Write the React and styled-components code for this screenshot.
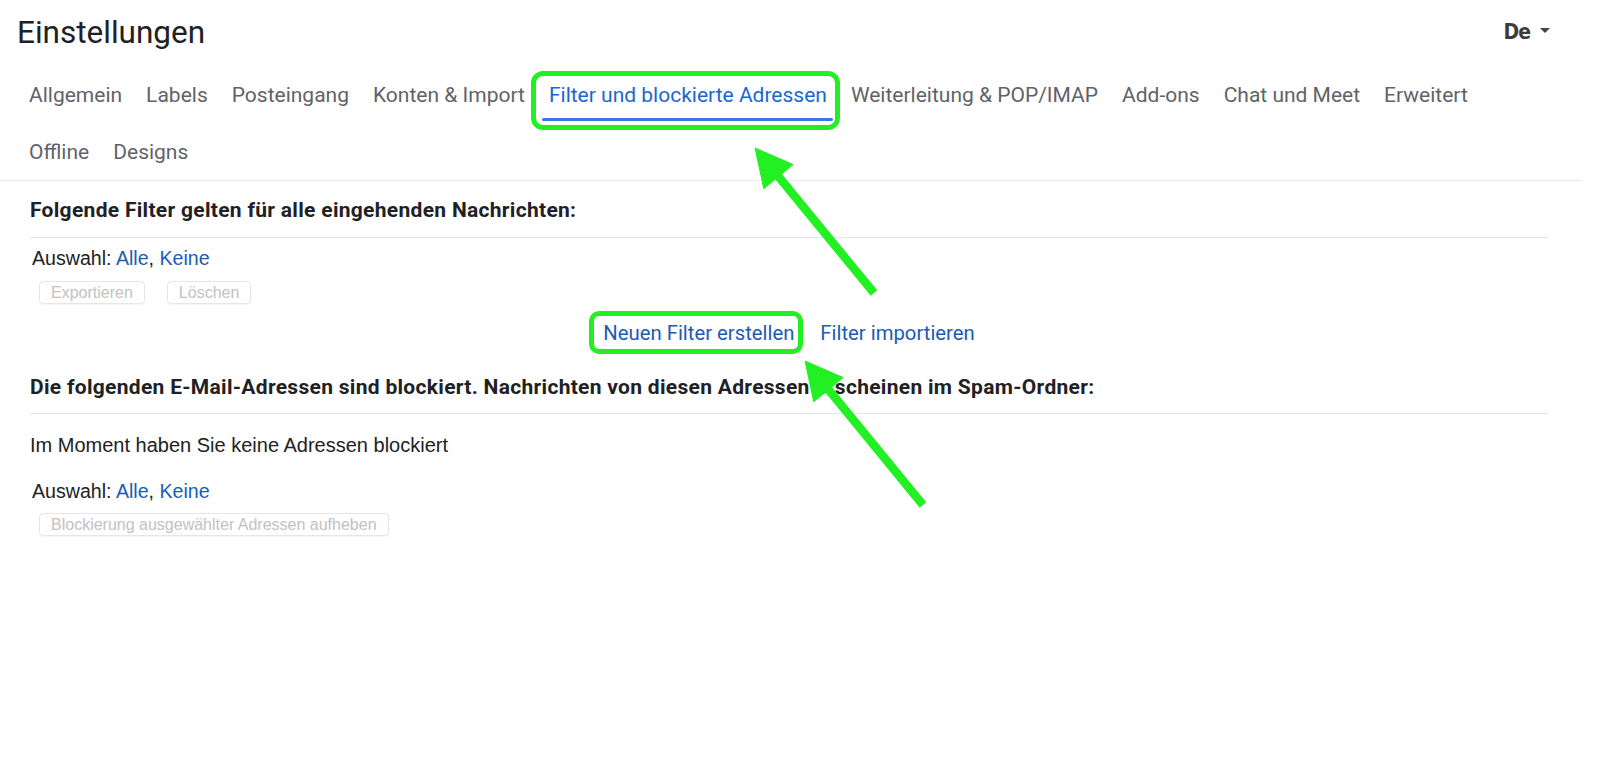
import React from 'react'
import styled, { createGlobalStyle, css } from 'styled-components'

const GlobalStyle = createGlobalStyle`
  body {
    margin: 0;
    background: #ffffff;
    font-family: Roboto, "Liberation Sans", sans-serif;
  }
`;

const green = '#22f022';

const Page = styled.div`
  position: relative;
  min-height: 781px;
  background: #fff;
`;

const Header = styled.div`
  width: calc(100% - 18px);
  border-bottom: 1px solid #e8eaed;
`;

const TitleRow = styled.div`
  display: flex;
  align-items: center;
  justify-content: space-between;
  height: 64px;
  padding: 0 32px 2px 17px;
`;

const Title = styled.h1`
  margin: 0;
  font-family: Roboto, sans-serif;
  font-weight: 400;
  font-size: 31.5px;
  color: #202124;
`;

const Lang = styled.div`
  display: flex;
  align-items: center;
  gap: 10px;
  font-family: "DejaVu Sans Condensed", "DejaVu Sans", sans-serif;
  font-weight: 700;
  font-size: 21px;
  letter-spacing: -1px;
  color: #3c3c3c;
`;

const Caret = styled.span`
  width: 0;
  height: 0;
  border-left: 5px solid transparent;
  border-right: 5px solid transparent;
  border-top: 5px solid #444;
  margin-top: -4px;
`;

const Tabs = styled.div`
  display: flex;
  flex-wrap: wrap;
  gap: 0 8px;
  max-width: 1520px;
  padding-left: 21px;
`;

const markBox = css`
  &::after {
    content: '';
    position: absolute;
    border: 5px solid ${green};
    border-radius: 12px;
  }
`;

const Tab = styled.div`
  position: relative;
  height: 57px;
  display: flex;
  align-items: center;
  padding: 0 8px;
  font-size: 21px;
  color: ${p => (p.$active ? '#1a67d2' : '#5f6368')};
  white-space: nowrap;
  cursor: pointer;

  ${p => p.$active && css`
    &::before {
      content: '';
      position: absolute;
      left: 1px;
      right: 2px;
      bottom: 2px;
      height: 3px;
      background: #3b78de;
      border-radius: 2px;
    }
  `}

  ${p => p.$marked && css`
    ${markBox}
    &::after {
      left: -10px;
      right: -5px;
      top: 5px;
      bottom: -7px;
    }
  `}
`;

const Content = styled.div`
  padding: 0 52px 0 30px;
`;

const SectionTitle = styled.div`
  font-family: Roboto, sans-serif;
  font-weight: 700;
  font-size: 21px;
  letter-spacing: 0.3px;
  line-height: 20px;
  color: #202124;
  padding: ${p => (p.$first ? '19px 0 17px' : '33px 0 16px')};
  border-bottom: 1px solid #e6e6e6;
`;

const Text = styled.div`
  font-family: "Liberation Sans", Arial, sans-serif;
  font-size: ${p => p.$size || 20}px;
  line-height: 22px;
  color: #222;
  margin-top: ${p => p.$top || 0}px;
  padding-left: ${p => p.$indent || 0}px;
`;

const Link = styled.span`
  color: #1a5cba;
  cursor: pointer;
`;

const ButtonRow = styled.div`
  display: flex;
  gap: 22px;
  margin-top: ${p => p.$top || 0}px;
  padding-left: 9px;
`;

const GhostButton = styled.button`
  height: 23px;
  padding: 0 11px;
  font-family: "Liberation Sans", Arial, sans-serif;
  font-size: 16px;
  line-height: 20px;
  color: #c2c2c2;
  background: #fff;
  border: 1px solid #e6e6e6;
  border-radius: 4px;
  box-shadow: 0 1px 1px rgba(0, 0, 0, 0.03);
`;

const Actions = styled.div`
  display: flex;
  justify-content: center;
  gap: 26px;
  margin-top: 18px;
  font-family: Roboto, sans-serif;
  font-size: 20.3px;
  line-height: 22px;
`;

const ActionLink = styled.span`
  position: relative;
  color: #1c5bb5;
  cursor: pointer;

  ${p => p.$marked && css`
    ${markBox}
    &::after {
      left: -14px;
      right: -9px;
      top: -11px;
      bottom: -10px;
      border-radius: 10px;
    }
  `}
`;

const Overlay = styled.svg`
  position: absolute;
  top: 0;
  left: 0;
  width: 100%;
  height: 100%;
  pointer-events: none;
`;

const Arrow = ({ tip, tail }) => {
  const dx = tail[0] - tip[0];
  const dy = tail[1] - tip[1];
  const len = Math.hypot(dx, dy);
  const ux = dx / len;
  const uy = dy / len;
  const head = 37;
  const half = 19;
  const bx = tip[0] + ux * head;
  const by = tip[1] + uy * head;
  const p1 = [bx - uy * half, by + ux * half];
  const p2 = [bx + uy * half, by - ux * half];
  return (
    <g fill={green} stroke={green}>
      <line x1={bx - ux * 4} y1={by - uy * 4} x2={tail[0]} y2={tail[1]} strokeWidth="8.5" />
      <polygon points={`${tip.join(',')} ${p1.join(',')} ${p2.join(',')}`} strokeWidth="1" />
    </g>
  );
};

const tabs = [
  'Allgemein', 'Labels', 'Posteingang', 'Konten & Import',
  'Filter und blockierte Adressen', 'Weiterleitung & POP/IMAP',
  'Add-ons', 'Chat und Meet', 'Erweitert', 'Offline', 'Designs',
];

const Selection = ({ top }) => (
  <Text $top={top} $indent={2} $size={19.6}>
    Auswahl: <Link>Alle</Link>, <Link>Keine</Link>
  </Text>
);

const App = () => {
  return (
    <Page>
      <GlobalStyle />
      <Header>
        <TitleRow>
          <Title>Einstellungen</Title>
          <Lang>De<Caret /></Lang>
        </TitleRow>
        <Tabs>
          {tabs.map(t => {
            const active = t === 'Filter und blockierte Adressen';
            return (
              <Tab key={t} $active={active} $marked={active}>{t}</Tab>
            );
          })}
        </Tabs>
      </Header>

      <Content>
        <SectionTitle $first>Folgende Filter gelten für alle eingehenden Nachrichten:</SectionTitle>
        <Selection top={9} />
        <ButtonRow $top={12}>
          <GhostButton>Exportieren</GhostButton>
          <GhostButton>Löschen</GhostButton>
        </ButtonRow>
        <Actions>
          <ActionLink $marked>Neuen Filter erstellen</ActionLink>
          <ActionLink>Filter importieren</ActionLink>
        </Actions>

        <SectionTitle>Die folgenden E-Mail-Adressen sind blockiert. Nachrichten von diesen Adressen erscheinen im Spam-Ordner:</SectionTitle>
        <Text $top={20}>Im Moment haben Sie keine Adressen blockiert</Text>
        <Selection top={24} />
        <ButtonRow $top={11}>
          <GhostButton>Blockierung ausgewählter Adressen aufheben</GhostButton>
        </ButtonRow>
      </Content>

      <Overlay>
        <Arrow tip={[755, 148]} tail={[874, 293]} />
        <Arrow tip={[805, 361]} tail={[923, 505]} />
      </Overlay>
    </Page>
  )
}

export default App
